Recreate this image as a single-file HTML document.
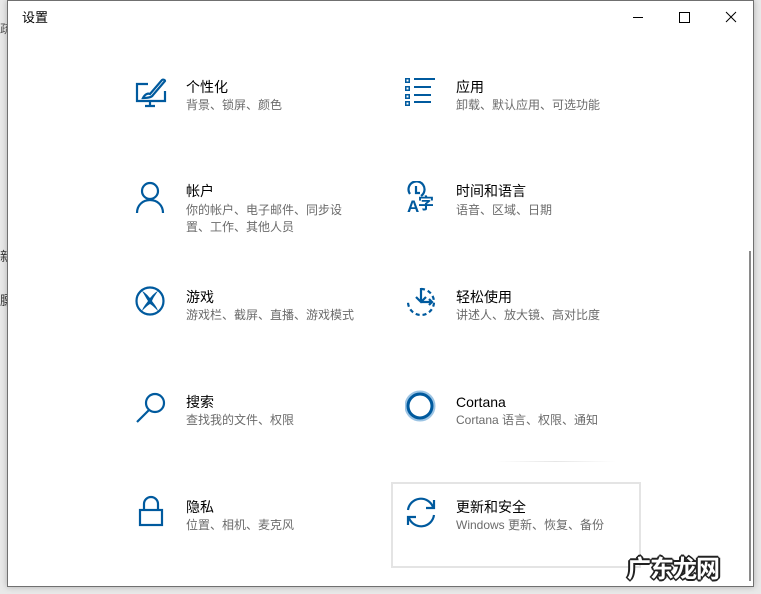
<!DOCTYPE html>
<html><head><meta charset="utf-8"><style>
body{margin:0;width:761px;height:594px;background:#e9e9e9;position:relative;overflow:hidden;font-family:"Liberation Sans","Noto Sans CJK SC",sans-serif}
.win{position:absolute;left:7px;top:0;width:745px;height:585px;background:#fff;border:1px solid #707070;box-shadow:0 0 6px rgba(0,0,0,.25)}
.t{position:absolute;font-size:14px;color:#000;line-height:18px;white-space:nowrap}
.s{position:absolute;font-size:12px;color:#6b6b6b;line-height:16px}
svg{position:absolute}
.b{stroke:#005a9e;fill:none;stroke-width:2.2}
</style></head><body>
<div style="position:absolute;left:0;top:20px;font-size:12px;color:#555">疏</div>
<div style="position:absolute;left:0;top:246px;font-size:13px;color:#333">新</div>
<div style="position:absolute;left:0;top:290px;font-size:13px;color:#333">膘</div>
<div class="win">
<div class="t" style="left:14px;top:8px;font-size:13px">设置</div>
<div style="position:absolute;left:625px;top:16px;width:10px;height:1px;background:#000"></div>
<div style="position:absolute;left:671px;top:11px;width:9px;height:9px;border:1px solid #000"></div>
<svg style="left:717px;top:10px" width="12" height="12"><path d="M1 1L11 11M11 1L1 11" stroke="#000" stroke-width="1"/></svg>
<div style="position:absolute;right:2px;top:250px;width:2px;height:330px;background:#8a8a8a"></div>

<svg style="left:127px;top:76px" width="34" height="32"><path class="b" d="M13 7H2v17h28V14"/><path class="b" d="M8 21c2-4 5-5 7-4l12-14c1-1 3 0 3 1L18 18c-1 2-5 3-10 3z"/><path class="b" d="M15 25v4M10 29h10"/></svg>
<div class="t" style="left:178px;top:77px">个性化</div>
<div class="s" style="left:178px;top:96px">背景、锁屏、颜色</div>

<svg style="left:127px;top:180px" width="32" height="34"><circle class="b" cx="15" cy="10" r="8"/><path class="b" d="M2 32c0-8 6-13 13-13s13 5 13 13"/></svg>
<div class="t" style="left:178px;top:181px">帐户</div>
<div class="s" style="left:178px;top:201px;width:160px;line-height:17px">你的帐户、电子邮件、同步设置、工作、其他人员</div>

<svg style="left:127px;top:285px" width="32" height="32"><circle class="b" cx="15" cy="15" r="13.5"/><path d="M7 5c4 2 6 5 8 7c2-2 4-5 8-7c-2 3-5 7-6 10c2 3 5 6 6 10c-3-3-6-6-8-7c-2 1-5 4-8 7c1-4 4-7 6-10C11 12 9 8 7 5z" fill="#005a9e"/></svg>
<div class="t" style="left:178px;top:287px">游戏</div>
<div class="s" style="left:178px;top:306px">游戏栏、截屏、直播、游戏模式</div>

<svg style="left:127px;top:389px" width="34" height="34"><circle class="b" cx="20" cy="13" r="9"/><path class="b" d="M14 20L2 32"/></svg>
<div class="t" style="left:178px;top:392px">搜索</div>
<div class="s" style="left:178px;top:411px">查找我的文件、权限</div>

<svg style="left:130px;top:494px" width="26" height="34"><path class="b" d="M6 15V9a7 7 0 0 1 14 0v6"/><rect class="b" x="2" y="15" width="22" height="15"/></svg>
<div class="t" style="left:178px;top:497px">隐私</div>
<div class="s" style="left:178px;top:516px">位置、相机、麦克风</div>

<svg style="left:397px;top:75px" width="32" height="30"><g fill="#005a9e"><rect x="0" y="2" width="5" height="5"/><rect x="0" y="10" width="5" height="5"/><rect x="0" y="18" width="5" height="5"/><rect x="0" y="25" width="5" height="5"/></g><g fill="#fff"><rect x="1.5" y="3.5" width="2" height="2"/><rect x="1.5" y="11.5" width="2" height="2"/><rect x="1.5" y="19.5" width="2" height="2"/><rect x="1.5" y="26.5" width="2" height="2"/></g><path d="M9 3h21M9 11h17M9 19h17M9 26h17" stroke="#005a9e" stroke-width="2"/></svg>
<div class="t" style="left:448px;top:77px">应用</div>
<div class="s" style="left:448px;top:96px">卸载、默认应用、可选功能</div>

<svg style="left:397px;top:180px" width="34" height="32"><path class="b" d="M5 13a8 8 0 1 1 11 2"/><path class="b" d="M11 5v7h4"/><text x="2" y="31" font-size="17" font-weight="bold" fill="#005a9e" font-family="Liberation Sans">A</text><text x="13" y="28" font-size="16" font-weight="bold" fill="#005a9e" font-family="Noto Sans CJK SC">字</text></svg>
<div class="t" style="left:448px;top:181px">时间和语言</div>
<div class="s" style="left:448px;top:201px">语音、区域、日期</div>

<svg style="left:397px;top:285px" width="32" height="32"><path d="M16 3a13 13 0 1 1-13 13" class="b" stroke-dasharray="4 3"/><path class="b" d="M16 2v14M11 11l5 5 5-5M16 16h11M24 13l3 3-3 3"/></svg>
<div class="t" style="left:448px;top:287px">轻松使用</div>
<div class="s" style="left:448px;top:306px">讲述人、放大镜、高对比度</div>

<svg style="left:397px;top:389px" width="34" height="34"><circle cx="15" cy="16" r="13" fill="none" stroke="#9cc4e4" stroke-width="5"/><circle cx="15" cy="16" r="12" fill="none" stroke="#005a9e" stroke-width="3"/></svg>
<div class="t" style="left:448px;top:392px">Cortana</div>
<div class="s" style="left:448px;top:411px">Cortana 语言、权限、通知</div>

<div style="position:absolute;left:488px;top:460px;width:120px;height:1px;background:linear-gradient(90deg,transparent,#e6e6e6,transparent)"></div>
<div style="position:absolute;left:383px;top:481px;width:246px;height:82px;border:2px solid #e4e4e4"></div>
<svg style="left:397px;top:495px" width="34" height="34"><path class="b" d="M3 14A13 13 0 0 1 28 11"/><path class="b" d="M29 4v8h-8"/><path class="b" d="M29 19A13 13 0 0 1 4 22"/><path class="b" d="M3 29v-8h8"/></svg>
<div class="t" style="left:448px;top:497px">更新和安全</div>
<div class="s" style="left:448px;top:516px">Windows 更新、恢复、备份</div>
</div>
<div style="position:absolute;left:627px;top:549px;font-size:24px;font-weight:bold;color:#fff;font-family:'Noto Sans CJK SC',sans-serif;letter-spacing:-1px;text-shadow:1px 1px 0 #222,-1px -1px 0 #222,1px -1px 0 #222,-1px 1px 0 #222,2px 0 0 #222,-2px 0 0 #222,0 2px 0 #222,0 -2px 0 #222">广东龙网</div>
</body></html>
